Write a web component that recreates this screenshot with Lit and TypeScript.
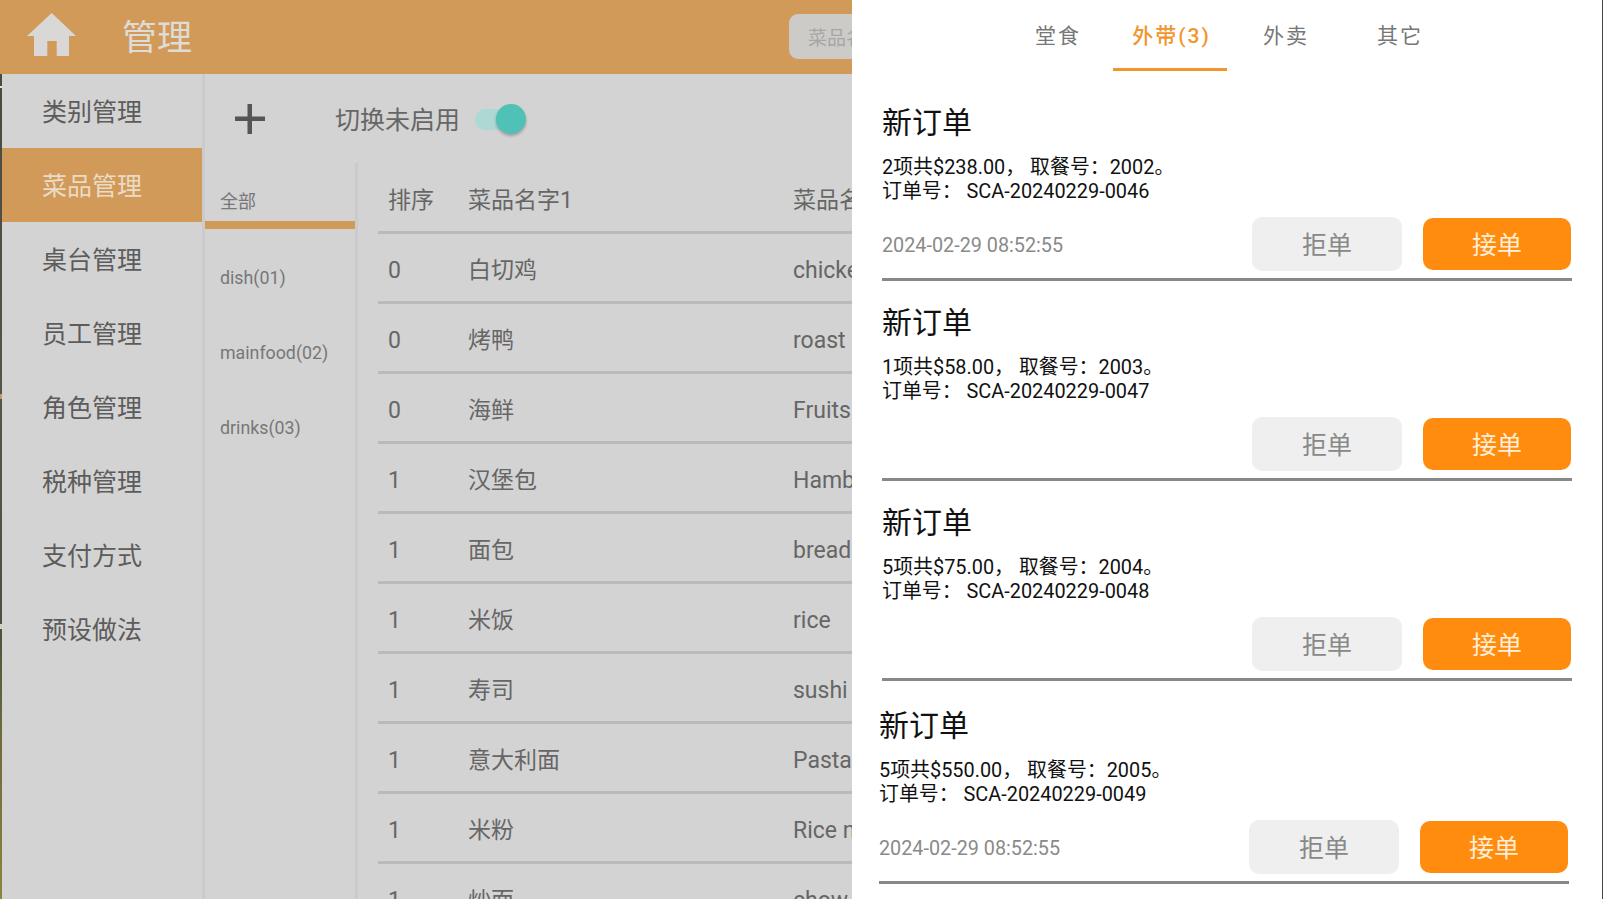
import { LitElement, html, css } from "lit";
import { customElement } from "lit/decorators.js";

const MENU = ["类别管理", "菜品管理", "桌台管理", "员工管理", "角色管理", "税种管理", "支付方式", "预设做法"];
const CATS = ["dish(01)", "mainfood(02)", "drinks(03)"];
const ROWS: [string, string, string][] = [
  ["0", "白切鸡", "chicken"],
  ["0", "烤鸭", "roast duck"],
  ["0", "海鲜", "Fruits de mer"],
  ["1", "汉堡包", "Hamburger"],
  ["1", "面包", "bread"],
  ["1", "米饭", "rice"],
  ["1", "寿司", "sushi"],
  ["1", "意大利面", "Pasta"],
  ["1", "米粉", "Rice noodles"],
  ["1", "炒面", "chow mein"],
];
const TABS = ["堂食", "外带(3)", "外卖", "其它"];
const ORDERS = [
  { info: "2项共$238.00， 取餐号：2002。", no: "SCA-20240229-0046", time: "2024-02-29 08:52:55" },
  { info: "1项共$58.00， 取餐号：2003。", no: "SCA-20240229-0047", time: "" },
  { info: "5项共$75.00， 取餐号：2004。", no: "SCA-20240229-0048", time: "" },
  { info: "5项共$550.00， 取餐号：2005。", no: "SCA-20240229-0049", time: "2024-02-29 08:52:55" },
];

@customElement("app-root")
export class AppRoot extends LitElement {
  static styles = css`
    :host {
      display: block;
      width: 1603px;
      height: 899px;
      overflow: hidden;
      font-family: Roboto, "Noto Sans CJK SC", sans-serif;
    }
    .page { display: flex; width: 1603px; height: 899px; background: #d3d3d3; }
    .main { width: 852px; height: 899px; display: flex; flex-direction: column; overflow: hidden; flex: none; }
    .header { height: 74px; flex: none; background: #d29a58; display: flex; align-items: center; }
    .home { width: 50px; height: 44px; margin-left: 27px; margin-bottom: 4px; flex: none; }
    .title { margin-left: 45px; font-size: 35px; color: #dedcd8; margin-bottom: 6px; }
    .search {
      margin-left: auto; width: 120px; margin-right: -57px; height: 45px; border-radius: 9px;
      background: #cdcbc8; color: #a6a6a6; font-size: 19px; display: flex; align-items: center;
      padding-left: 19px; white-space: nowrap; flex: none; box-sizing: border-box;
      margin-bottom: 1px;
    }
    .body { flex: 1; display: flex; min-height: 0; }
    .strip {
      width: 2px; flex: none;
      background: linear-gradient(
        #4a4a40 0, #4a4a40 12px, #e8e4d8 12px, #e8e4d8 14px, #4a4a40 14px,
        #55544a 320px, #c89a6a 320px, #c89a6a 325px, #55544a 325px,
        #4f5040 550px, #d8d0b8 550px, #d8d0b8 555px, #4f5040 555px,
        #6a6a3a 650px, #8a8440 825px
      );
    }
    .side { width: 200px; flex: none; }
    .side-item {
      height: 74px; box-sizing: border-box; display: flex; align-items: center; padding: 0 0 2px 40px;
      font-size: 25px; color: #5c5c5c;
    }
    .side-item.on { background: #d29a58; color: #e9dcc6; }
    .v1 { width: 3px; flex: none; background: #cbcbcb; }
    .content { flex: 1; display: flex; flex-direction: column; min-width: 0; }
    .toolbar { height: 89px; flex: none; display: flex; align-items: center; }
    .plus { width: 30px; height: 30px; margin-left: 30px; flex: none; }
    .tog-label { margin-left: 70px; margin-bottom: 1px; font-size: 25px; color: #666; }
    .toggle { margin-left: 15px; width: 51px; height: 30px; position: relative; flex: none; }
    .track { position: absolute; left: 0; top: 5px; width: 44px; height: 21px; border-radius: 11px; background: #acd9d4; }
    .thumb {
      position: absolute; right: 0; top: 0; width: 30px; height: 30px; border-radius: 50%;
      background: #4fc1b6; box-shadow: 0 2px 3px rgba(0, 0, 0, 0.25);
    }
    .lower { flex: 1; display: flex; min-height: 0; }
    .cats { width: 150px; flex: none; }
    .cat { height: 75px; display: flex; align-items: center; padding-left: 15px; font-size: 17.8px; color: #777; }
    .cat.on { height: 66px; box-sizing: border-box; padding-top: 16px; border-bottom: 8px solid #d29a58; margin-bottom: 11px; font-size: 18px; }
    .v2 { width: 3px; flex: none; background: #cbcbcb; }
    .table { flex: 1; margin-left: 20px; min-width: 0; overflow: hidden; }
    .row {
      height: 70px; box-sizing: border-box; border-bottom: 3px solid #bababa;
      display: flex; align-items: center; padding: 6px 0 0 10px; font-size: 23px; color: #666;
      white-space: nowrap; line-height: 40px;
    }
    .row.head { height: 71px; padding-top: 8px; }
    .c1 { width: 80px; flex: none; }
    .c2 { width: 325px; flex: none; }
    .drawer {
      flex: 1; background: #fff; display: flex; flex-direction: column;
      box-sizing: border-box; border-right: 1px solid #444; min-width: 0;
    }
    .tabs { display: flex; justify-content: center; height: 71px; flex: none; }
    .tab {
      width: 114px; height: 71px; box-sizing: border-box; display: flex; align-items: center; justify-content: center;
      font-size: 21px; color: #777; letter-spacing: 2px; padding: 0 0 4px 4px;
    }
    .tab.on { color: #f0962d; border-bottom: 3px solid #f0962d; padding: 0 0 1px 3px; letter-spacing: 2px; font-weight: 500; }
    .orders { padding: 10px 30px 0 30px; }
    .order {
      height: 200px; box-sizing: border-box; border-bottom: 3px solid #888;
      display: flex; flex-direction: column; padding-top: 22px; color: #111;
    }
    .order.last { margin: 3px 3px 0 -3px; }
    .o-title { font-size: 30px; line-height: 40px; color: #111; }
    .o-info { font-size: 19.9px; line-height: 24px; margin-top: 13px; white-space: pre; }
    .o-foot { margin-top: auto; padding-bottom: 7px; display: flex; align-items: center; height: 54px; }
    .o-time { font-size: 19.8px; color: #8a8a8a; margin-top: 3px; }
    .btns { margin-left: auto; display: flex; align-items: center; }
    .btn {
      border-radius: 10px; display: flex; align-items: center; justify-content: center;
      font-size: 25px; box-sizing: border-box; padding-bottom: 2px;
    }
    .reject { width: 150px; height: 54px; background: #efefef; color: #888; }
    .accept { width: 148px; height: 52px; margin: 0 1px 0 21px; background: #ff8c0f; color: #ffeed8; }
  `;

  render() {
    return html`
      <div class="page">
        <div class="main">
          <div class="header">
            <svg class="home" viewBox="0 0 50 44" aria-hidden="true">
              <path fill="#d9d8d6" d="M24.7 0 L49 23 H42 V43 H29.7 V28 H20.3 V43 H7 V23 H0 Z" />
            </svg>
            <div class="title">管理</div>
            <div class="search">菜品名称</div>
          </div>
          <div class="body">
            <div class="strip"></div>
            <div class="side">
              ${MENU.map((m, i) => html`<div class="side-item ${i === 1 ? "on" : ""}">${m}</div>`)}
            </div>
            <div class="v1"></div>
            <div class="content">
              <div class="toolbar">
                <svg class="plus" viewBox="0 0 30 30" aria-hidden="true">
                  <path fill="#555" d="M12.5 0 H17 V12.5 H30 V17 H17 V30 H12.5 V17 H0 V12.5 H12.5 Z" />
                </svg>
                <div class="tog-label">切换未启用</div>
                <div class="toggle"><div class="track"></div><div class="thumb"></div></div>
              </div>
              <div class="lower">
                <div class="cats">
                  <div class="cat on">全部</div>
                  ${CATS.map((c) => html`<div class="cat">${c}</div>`)}
                </div>
                <div class="v2"></div>
                <div class="table">
                  <div class="row head">
                    <div class="c1">排序</div><div class="c2">菜品名字1</div><div>菜品名字2</div>
                  </div>
                  ${ROWS.map(
                    (r) => html`<div class="row"><div class="c1">${r[0]}</div><div class="c2">${r[1]}</div><div>${r[2]}</div></div>`
                  )}
                </div>
              </div>
            </div>
          </div>
        </div>
        <div class="drawer">
          <div class="tabs">
            ${TABS.map((t, i) => html`<div class="tab ${i === 1 ? "on" : ""}">${t}</div>`)}
          </div>
          <div class="orders">
            ${ORDERS.map(
              (o, i) => html`
                <div class="order ${i === 3 ? "last" : ""}">
                  <div class="o-title">新订单</div>
                  <div class="o-info">${o.info}<br />订单号： ${o.no}</div>
                  <div class="o-foot">
                    <div class="o-time">${o.time}</div>
                    <div class="btns">
                      <div class="btn reject">拒单</div>
                      <div class="btn accept">接单</div>
                    </div>
                  </div>
                </div>
              `
            )}
          </div>
        </div>
      </div>
    `;
  }
}
